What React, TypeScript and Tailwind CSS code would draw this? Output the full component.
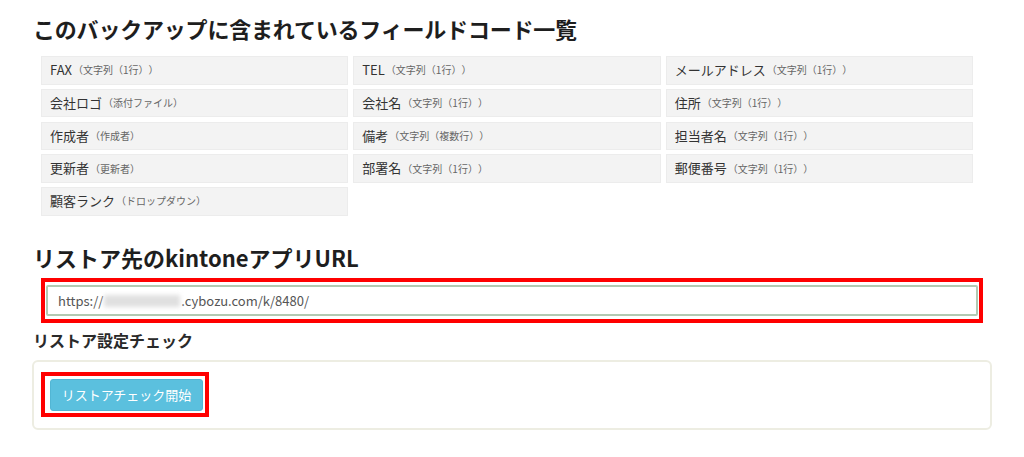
import React from "react";

const fields: [string, string][] = [
  ["FAX", "（文字列（1行））"],
  ["TEL", "（文字列（1行））"],
  ["メールアドレス", "（文字列（1行））"],
  ["会社ロゴ", "（添付ファイル）"],
  ["会社名", "（文字列（1行））"],
  ["住所", "（文字列（1行））"],
  ["作成者", "（作成者）"],
  ["備考", "（文字列（複数行））"],
  ["担当者名", "（文字列（1行））"],
  ["更新者", "（更新者）"],
  ["部署名", "（文字列（1行））"],
  ["郵便番号", "（文字列（1行））"],
  ["顧客ランク", "（ドロップダウン）"],
];

export default function App() {
  return (
    <div
      className="w-[1024px] h-[457px] bg-white overflow-hidden px-[32px] pt-[12px] text-[#333] [text-spacing-trim:space-all]"
      style={{ fontFamily: '"Noto Sans CJK JP", "Noto Sans", "Liberation Sans", sans-serif' }}
    >
      <h1 className="pl-[1px] text-[22px] leading-[32px] font-bold text-[#1e1e1e] tracking-[-0.2px]">
        このバックアップに含まれているフィールドコード一覧
      </h1>
      <div className="mt-[12px] ml-[9px] w-[932px] grid grid-cols-3 gap-x-[5px] gap-y-[4.25px]">
        {fields.map(([name, type]) => (
          <div
            key={name}
            className="h-[28.5px] bg-[#f3f3f3] border border-[#ececec] flex items-center pl-[8px] pb-[1px]"
          >
            <span className="text-[13px] text-[#333]">{name}</span>
            <span className="ml-[1px] text-[10px] text-[#666]">{type}</span>
          </div>
        ))}
      </div>
      <h2 className="mt-[25.5px] pl-[1px] text-[22px] leading-[32px] font-bold text-[#1e1e1e]">
        リストア先のkintoneアプリURL
      </h2>
      <div className="mt-[5px] ml-[9px] w-[942px] border-[4px] border-[#ff0000] py-[3px] px-[1px]">
        <div className="h-[31px] rounded-[2px] border-2 border-[#b2c9b2] bg-white flex items-center pl-[10px] text-[13px] text-[#555]">
          <span>https://</span>
          <span className="inline-block w-[76px] h-[12px] bg-[#e0e0e0] blur-[2px] mx-[1px]" />
          <span>.cybozu.com/k/8480/</span>
        </div>
      </div>
      <h3 className="mt-[5px] pl-[1px] text-[16px] leading-[24px] font-bold text-[#2a2a2a]">
        リストア設定チェック
      </h3>
      <div className="mt-[8px] w-[960px] h-[70px] rounded-[6px] border-2 border-[#edede2] pl-[7px] pt-[10px]">
        <div className="inline-flex border-[4px] border-[#ff0000] pl-[5px] pr-[2px] pt-[3px] pb-[2px]">
          <button className="h-[32px] w-[153px] rounded-[3px] bg-[#5bc0de] border border-[#52b6d4] text-white text-[13px] flex items-center justify-center">
            リストアチェック開始
          </button>
        </div>
      </div>
    </div>
  );
}
